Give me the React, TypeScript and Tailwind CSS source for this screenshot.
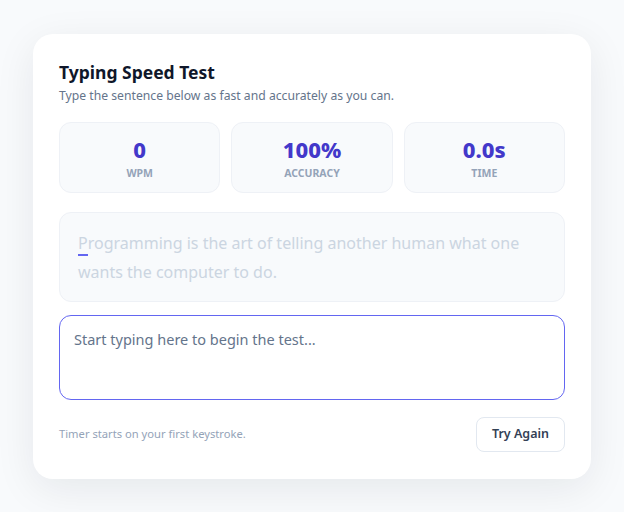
import { useState } from 'react';

const quote = 'Programming is the art of telling another human what one wants the computer to do.';

function Stat({ value, label }: { value: string; label: string }) {
  return (
    <div className="flex h-[71px] flex-col items-center justify-center rounded-xl border border-[#eef1f6] bg-[#f8fafc] pt-[2px]">
      <span className="text-[22px] font-extrabold leading-[28px] text-[#4338ca]">{value}</span>
      <span className="mt-[2px] text-[10.5px] font-bold uppercase leading-[16px] text-[#94a3b8]">{label}</span>
    </div>
  );
}

export default function App() {
  const [text, setText] = useState('');
  return (
    <div
      className="flex min-h-screen items-center justify-center bg-[#f8fafc]"
      style={{ fontFamily: '"Noto Sans", "Open Sans", sans-serif' }}
    >
      <div className="w-[558px] rounded-[20px] bg-white px-[26px] pt-[24px] pb-[27px] shadow-[0_10px_40px_rgba(15,23,42,0.08)]">
        <h1 className="text-[17.5px] font-bold leading-[28px] text-[#0f172a]">Typing Speed Test</h1>
        <p className="text-[12.2px] leading-[20px] text-[#64748b]">
          Type the sentence below as fast and accurately as you can.
        </p>

        <div className="mt-[16px] grid grid-cols-3 gap-[11px]">
          <Stat value="0" label="WPM" />
          <Stat value="100%" label="Accuracy" />
          <Stat value="0.0s" label="Time" />
        </div>

        <div className="mt-[19px] h-[90px] rounded-xl border border-[#eef1f6] bg-[#f8fafc] px-[18px] pt-[16px] text-[16px] leading-[29px] text-[#cbd5e1]">
          <span className="border-b-2 border-[#6366f1]">{quote[0]}</span>
          {quote.slice(1)}
        </div>

        <textarea
          value={text}
          onChange={(e) => setText(e.target.value)}
          placeholder="Start typing here to begin the test..."
          className="mt-[13px] block h-[85px] w-full resize-none rounded-xl border border-[#6366f1] px-[14px] py-[11px] text-[14.5px] leading-[24px] text-[#334155] outline-none placeholder:text-[#64748b]"
        />

        <div className="mt-[17px] flex items-center justify-between">
          <span className="text-[11.2px] text-[#94a3b8]">Timer starts on your first keystroke.</span>
          <button
            onClick={() => setText('')}
            className="h-[35px] rounded-lg border border-[#e2e8f0] bg-white px-[15px] text-[12.5px] font-semibold text-[#334155]"
          >
            Try Again
          </button>
        </div>
      </div>
    </div>
  );
}
